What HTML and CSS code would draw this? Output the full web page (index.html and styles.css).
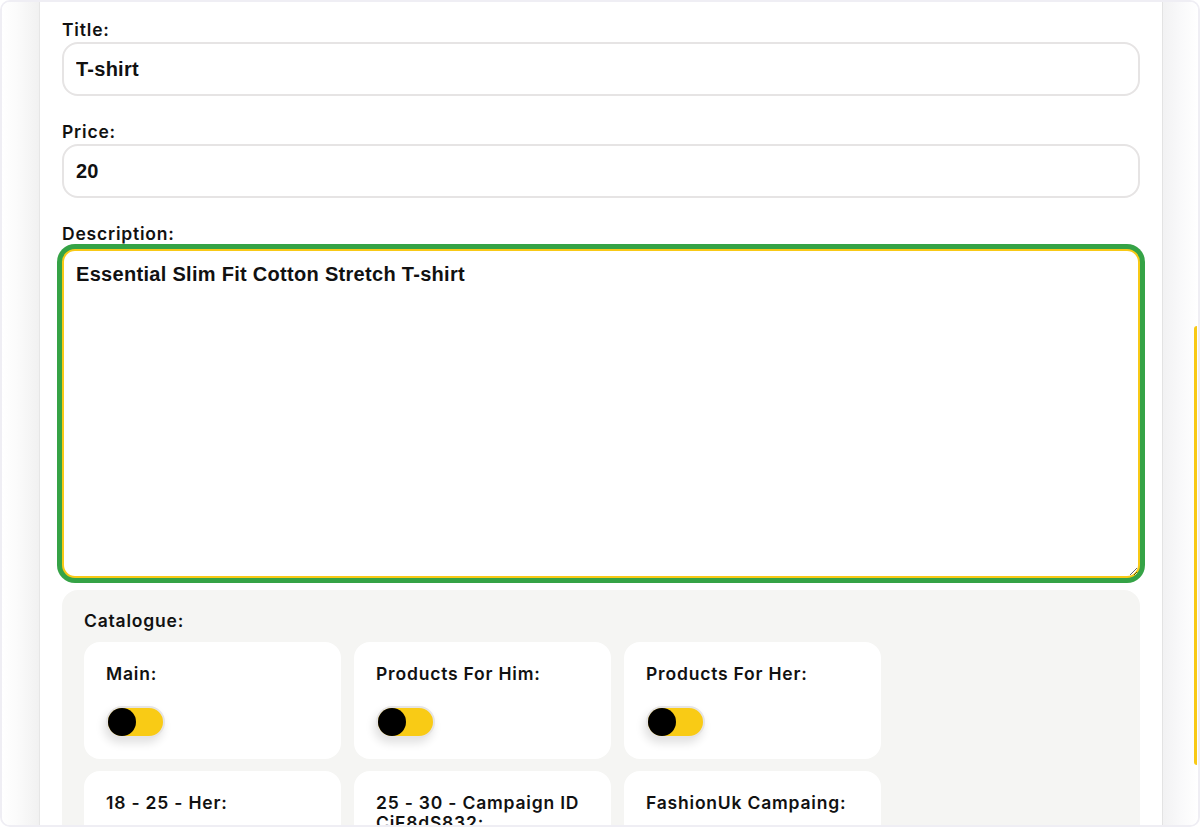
FILE: index.html
```html
<!DOCTYPE html>
<html lang="en">
<head>
<meta charset="utf-8">
<title>Edit product</title>
<link rel="stylesheet" href="styles.css">
</head>
<body>
<div class="frame">
  <div class="gutter gutter-left"></div>
  <main class="panel">
    <form class="product-form">
      <div class="field">
        <label class="field-label" for="title">Title:</label>
        <input id="title" class="text-input" type="text" value="T-shirt">
      </div>
      <div class="field">
        <label class="field-label" for="price">Price:</label>
        <input id="price" class="text-input" type="text" value="20">
      </div>
      <div class="field field-desc">
        <label class="field-label" for="desc">Description:</label>
        <textarea id="desc" class="text-area">Essential Slim Fit Cotton Stretch T-shirt</textarea>
      </div>
      <section class="catalogue">
        <h3 class="catalogue-title">Catalogue:</h3>
        <div class="catalogue-grid">
          <div class="cat-card"><span class="cat-label">Main:</span><span class="switch"><span class="knob"></span></span></div>
          <div class="cat-card"><span class="cat-label">Products For Him:</span><span class="switch"><span class="knob"></span></span></div>
          <div class="cat-card"><span class="cat-label">Products For Her:</span><span class="switch"><span class="knob"></span></span></div>
          <div class="cat-card"><span class="cat-label">18 - 25 - Her:</span><span class="switch"><span class="knob"></span></span></div>
          <div class="cat-card"><span class="cat-label">25 - 30 - Campaign ID CiF8dS832:</span><span class="switch"><span class="knob"></span></span></div>
          <div class="cat-card"><span class="cat-label">FashionUk Campaing:</span><span class="switch"><span class="knob"></span></span></div>
        </div>
      </section>
    </form>
  </main>
  <div class="gutter gutter-right"></div>
  <span class="side-accent"></span>
</div>
</body>
</html>
```

FILE: styles.css
```css
* { box-sizing: border-box; }

html, body {
  margin: 0;
  padding: 0;
  background: #ffffff;
}

.frame {
  position: relative;
  width: 1200px;
  height: 827px;
  border: 2px solid #efeef4;
  border-radius: 10px;
  overflow: hidden;
  display: flex;
  background: #ffffff;
}

.gutter-left {
  width: 37px;
  flex: none;
  background: linear-gradient(to right, #ffffff 0%, #fbfbfb 40%, #f1f1f1 100%);
}

.gutter-right {
  width: 35px;
  flex: none;
  background: linear-gradient(to right, #f2f2f3 0%, #f9f9fa 50%, #ffffff 100%);
}

.panel {
  width: 1124px;
  flex: none;
  background: #ffffff;
  border-left: 1px solid #e6e6e6;
  border-right: 1px solid #e3e3e3;
  padding: 17px 22px 0;
}

.product-form {
  display: flex;
  flex-direction: column;
}

.field {
  display: flex;
  flex-direction: column;
  margin-bottom: 25px;
}

.field-label {
  font-family: Inter, "Noto Sans", sans-serif;
  font-weight: 600;
  font-size: 17.5px;
  letter-spacing: 0.8px;
  line-height: 22px;
  color: #111111;
  margin-bottom: 1px;
}

.field-desc {
  margin-bottom: 12px;
}

.field-desc .field-label {
  margin-bottom: 4px;
}

.text-input {
  height: 54px;
  border: 2px solid #e6e4e4;
  border-radius: 16px;
  padding: 0 12px;
  font-family: "Liberation Sans", Arial, sans-serif;
  font-weight: 700;
  font-size: 20px;
  letter-spacing: 0.25px;
  color: #111111;
  background: #ffffff;
  outline: none;
}

.text-area {
  height: 329px;
  border: 2px solid #f8c916;
  border-radius: 13px;
  padding: 11px 12px;
  font-family: "Liberation Sans", Arial, sans-serif;
  font-weight: 700;
  font-size: 20px;
  letter-spacing: 0.3px;
  line-height: 24px;
  color: #111111;
  background: #ffffff;
  outline: none;
  resize: vertical;
  box-shadow: 0 0 0 5px #35a346;
}

.catalogue {
  background: #f5f5f3;
  border-radius: 16px;
  padding: 20px 22px 22px;
}

.catalogue-title {
  margin: 0 0 10px;
  font-family: Inter, "Noto Sans", sans-serif;
  font-weight: 600;
  font-size: 17.5px;
  letter-spacing: 0.8px;
  line-height: 22px;
  color: #111111;
}

.catalogue-grid {
  display: grid;
  grid-template-columns: repeat(3, 257px);
  gap: 12px 13px;
}

.cat-card {
  background: #ffffff;
  border-radius: 16px;
  padding: 22px 22px 21px;
  display: flex;
  flex-direction: column;
  align-items: flex-start;
  gap: 22px;
}

.cat-label {
  font-family: Inter, "Noto Sans", sans-serif;
  font-weight: 600;
  font-size: 17.5px;
  letter-spacing: 0.8px;
  line-height: 20px;
  color: #111111;
}

.switch {
  width: 59px;
  height: 32px;
  border: 2px solid #e6e4e4;
  border-radius: 16px;
  background: #f9cb15;
  padding: 0;
  display: flex;
  align-items: center;
  box-shadow: -2px 5px 10px rgba(0, 0, 0, 0.12);
}

.knob {
  width: 28px;
  height: 28px;
  border-radius: 50%;
  background: #000000;
}

.side-accent {
  position: absolute;
  left: 1192px;
  top: 324px;
  width: 3px;
  height: 439px;
  background: #f8c916;
  border-radius: 3px 0 0 3px;
}
```
